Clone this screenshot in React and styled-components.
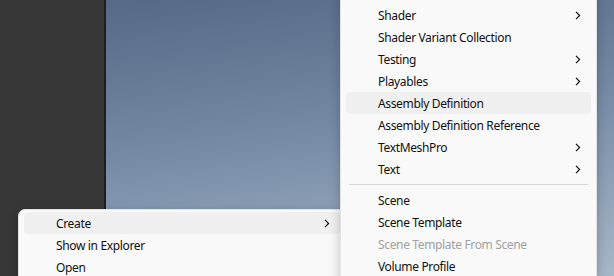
import React from "react";
import styled, { createGlobalStyle } from "styled-components";

const Global = createGlobalStyle`
  html, body { margin: 0; padding: 0; width: 614px; height: 276px; overflow: hidden; }
  body { font-family: "Segoe UI", "Noto Sans", "Open Sans", sans-serif; }
  #root { width: 614px; height: 276px; }
`;

const Stage = styled.div`
  position: relative;
  width: 614px;
  height: 276px;
  display: flex;
  overflow: hidden;
`;

const SidePanel = styled.div`
  width: 104px;
  background: #373737;
`;

const Divider = styled.div`
  width: 2px;
  background: #1e1e1e;
`;

const Viewport = styled.div`
  flex: 1;
  background: linear-gradient(172deg, #566987 0%, #7489a4 45%, #a8b8c9 100%);
`;

const Menu = styled.div`
  position: absolute;
  left: ${(p) => p.$left}px;
  top: ${(p) => p.$top}px;
  width: ${(p) => p.$width}px;
  box-sizing: border-box;
  background: #f9f9f9;
  border: 1px solid #e3e3e3;
  border-radius: 7px;
  padding: ${(p) => p.$padTop}px 5px 6px;
  box-shadow: 0 4px 12px rgba(0, 0, 0, 0.22);
  display: flex;
  flex-direction: column;
  z-index: ${(p) => p.$z};
`;

const Item = styled.div`
  height: 22px;
  display: flex;
  align-items: center;
  padding: 0 10px 0 32px;
  border-radius: 4px;
  font-size: 12px;
  letter-spacing: -0.35px;
  color: ${(p) => (p.$disabled ? "#a1a1a1" : "#111111")};
  background: ${(p) => (p.$hover ? "#f0f0f0" : "transparent")};
  white-space: nowrap;
`;

const Label = styled.span`
  flex: 1;
`;

const Separator = styled.div`
  height: 1px;
  margin: 4px 3px 4px 3px;
  background: #d6d6d6;
`;

const Chevron = () => (
  <svg width="6" height="9" viewBox="0 0 6 9">
    <polyline points="1,0.8 4.6,4.5 1,8.2" fill="none" stroke="#111111" strokeWidth="1.2" />
  </svg>
);

const MenuItem = ({ label, sub, hover, disabled }) => (
  <Item $hover={hover} $disabled={disabled}>
    <Label>{label}</Label>
    {sub && <Chevron />}
  </Item>
);

export default function App() {
  return (
    <>
      <Global />
      <Stage>
        <SidePanel />
        <Divider />
        <Viewport />
        <Menu $left={18} $top={209} $width={328} $padTop={2} $z={1}>
          <MenuItem label="Create" sub hover />
          <MenuItem label="Show in Explorer" />
          <MenuItem label="Open" />
        </Menu>
        <Menu $left={340} $top={-10} $width={257} $padTop={13} $z={2}>
          <MenuItem label="Shader" sub />
          <MenuItem label="Shader Variant Collection" />
          <MenuItem label="Testing" sub />
          <MenuItem label="Playables" sub />
          <MenuItem label="Assembly Definition" hover />
          <MenuItem label="Assembly Definition Reference" />
          <MenuItem label="TextMeshPro" sub />
          <MenuItem label="Text" sub />
          <Separator />
          <MenuItem label="Scene" />
          <MenuItem label="Scene Template" />
          <MenuItem label="Scene Template From Scene" disabled />
          <MenuItem label="Volume Profile" />
        </Menu>
      </Stage>
    </>
  );
}
